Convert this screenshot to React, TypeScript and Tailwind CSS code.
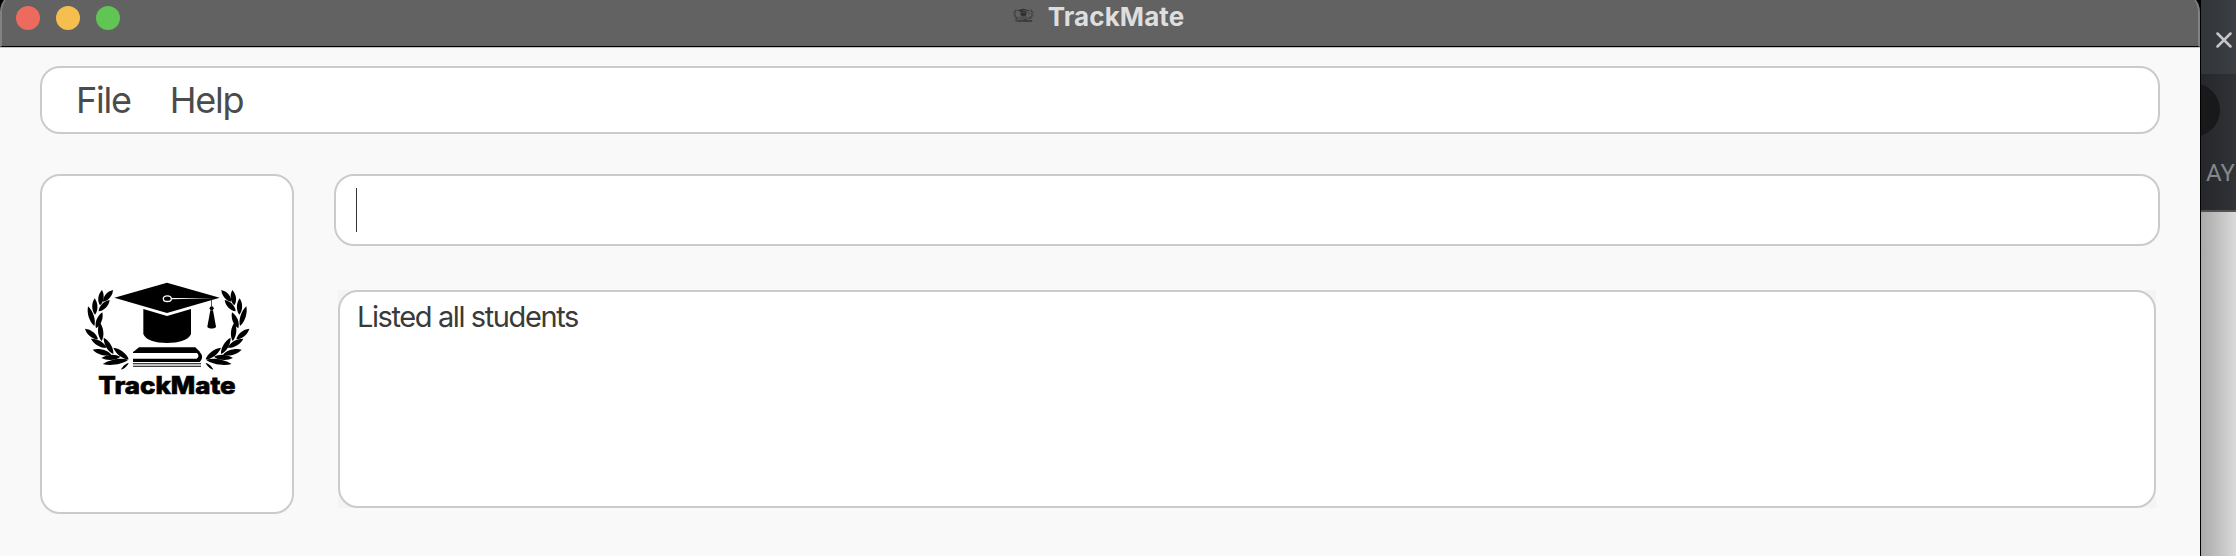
const LEAVES: [number, number, number, number][] = [
  [114, 60, 84, 95],
  [81, 60, 75, 106],
  [104, 90, 71, 124],
  [59, 85, 60, 134],
  [82, 127, 63, 175],
  [39, 109, 58, 168],
  [74, 157, 80, 213],
  [30, 176, 69, 208],
  [48, 206, 95, 233],
  [86, 203, 115, 252],
  [53, 239, 109, 254],
  [115, 233, 161, 268],
  [79, 264, 136, 260],
  [83, 282, 160, 269],
  [138, 299, 161, 279],
];

function leafPath([x1, y1, x2, y2]: [number, number, number, number], i: number) {
  const dx = x2 - x1;
  const dy = y2 - y1;
  const len = Math.hypot(dx, dy);
  const w = i === 14 ? 4.5 : 10.5;
  const nx = (-dy / len) * w;
  const ny = (dx / len) * w;
  const ax = x1 + dx * 0.3;
  const ay = y1 + dy * 0.3;
  const bx = x1 + dx * 0.75;
  const by = y1 + dy * 0.75;
  return `M${x1} ${y1}C${ax + nx} ${ay + ny} ${bx + nx} ${by + ny} ${x2} ${y2}C${bx - nx} ${by - ny} ${ax - nx} ${ay - ny} ${x1} ${y1}Z`;
}

function Logo({ className }: { className: string }) {
  return (
    <svg viewBox="0 0 555 405" className={className} fill="#000">
      <g>
        {LEAVES.map((l, i) => (
          <path key={i} d={leafPath(l, i)} />
        ))}
      </g>
      <g transform="translate(553 0) scale(-1 1)">
        {LEAVES.map((l, i) => (
          <path key={i} d={leafPath(l, i)} />
        ))}
      </g>
      <path d="M118 83L276 38L434 83L276 129Z" />
      <path d="M205 117L276 138L348 117V192C342 210 310 219 276 219C242 219 211 210 205 192Z" />
      <ellipse cx="277" cy="86" rx="12" ry="8.5" fill="#000" stroke="#fff" strokeWidth="4" />
      <path d="M289 84L420 84.5L289 88Z" fill="#fff" />
      <path d="M409 88H411V109H409Z" />
      <circle cx="410" cy="115" r="6" />
      <path d="M406 121H414L423 170C422 177 398 177 397 170Z" />
      <path d="M192 232H361L376 247H174Z" />
      <path d="M174 245H372C384 252 384 266 374 276H174V266H365C372 262 372 254 366 249H174Z" />
      <path d="M174 280H378V283H174ZM174 287H378V290H174Z" />
      <text
        x="70"
        y="371"
        textLength="412"
        lengthAdjust="spacingAndGlyphs"
        fontFamily="Inter, sans-serif"
        fontWeight="800"
        fontSize="72"
        stroke="#000"
        strokeWidth="2"
      >
        TrackMate
      </text>
    </svg>
  );
}

function TitleBar() {
  return (
    <header className="relative -mt-2 flex h-[55px] shrink-0 items-start justify-center rounded-t-[20px] border-x-2 border-b border-x-[#828282] border-b-black bg-[#626262] pt-2">
      <div className="absolute left-[14px] top-[14px] flex gap-4">
        <span className="size-6 rounded-full bg-[#ed6a5e]" />
        <span className="size-6 rounded-full bg-[#f5bf4f]" />
        <span className="size-6 rounded-full bg-[#61c554]" />
      </div>
      <div className="flex pr-1">
        <Logo className="mr-[13px] mt-[7px] h-[17px] w-[23px] opacity-50" />
        <h1 className="text-[26px] font-bold leading-[34px] tracking-[0.1px] text-[#dedede]">TrackMate</h1>
      </div>
    </header>
  );
}

function BackgroundWindow() {
  return (
    <aside className="flex w-[35px] shrink-0 flex-col overflow-hidden">
      <div className="h-[74px] bg-linear-to-r from-[#313438] to-[#3b3e42] pl-[15px] pt-8">
        <svg viewBox="0 0 16 16" className="size-4" stroke="#c6c7c8" strokeWidth="2.5" strokeLinecap="round">
          <path d="M1.5 1.5L14.5 14.5M14.5 1.5L1.5 14.5" />
        </svg>
      </div>
      <div className="h-[136px] bg-linear-to-r from-[#26272a] to-[#303236] pt-[9px]">
        <div className="-ml-[35px] size-[54px] rounded-full bg-[#18191b]" />
        <p className="pl-[5px] pt-[22px] font-[Roboto,sans-serif] text-[24px] leading-[28px] text-[#85878a]">AY</p>
      </div>
      <div className="h-[2px] bg-[#525254]" />
      <div className="flex-1 bg-linear-to-r from-[#a9a9a9] to-[#dadada]" />
    </aside>
  );
}

export default function App() {
  return (
    <div className="flex h-[556px] w-[2236px] overflow-hidden bg-black font-[Inter,sans-serif]">
      <div className="mr-px flex w-[2200px] shrink-0 flex-col">
        <TitleBar />
        <main className="flex flex-1 flex-col border-t border-[#c4c4c4] bg-[#f9f9f9] px-10 pt-[18px]">
          <nav className="flex h-[68px] items-center gap-[39px] rounded-[20px] border-2 border-[#cbcbcb] bg-white pl-[34px] text-[36px] leading-[44px] text-[#4b4b4b]">
            <span className="tracking-[-1.25px]">File</span>
            <span className="tracking-[-1.25px]">Help</span>
          </nav>
          <div className="mt-10 flex gap-10">
            <section className="flex h-[340px] w-[254px] justify-center rounded-[20px] border-2 border-[#cbcbcb] bg-white pl-px pt-[94px]">
              <Logo className="h-[135px] w-[185px]" />
            </section>
            <div className="flex flex-1 flex-col">
              <div className="h-[72px] rounded-[20px] border-2 border-[#cbcbcb] bg-white pl-5 pt-3">
                <div className="h-11 w-px bg-[#333]" />
              </div>
              <div className="mx-1 mt-11 bg-[#f4f4f4]">
                <div className="h-[218px] rounded-[20px] border-2 border-[#cbcbcb] bg-white pl-[17px] pt-[7px] text-[29px] leading-[36px] tracking-[-1.4px] text-[#3a3a3a]">
                  Listed all students
                </div>
              </div>
            </div>
          </div>
        </main>
      </div>
      <BackgroundWindow />
    </div>
  );
}
